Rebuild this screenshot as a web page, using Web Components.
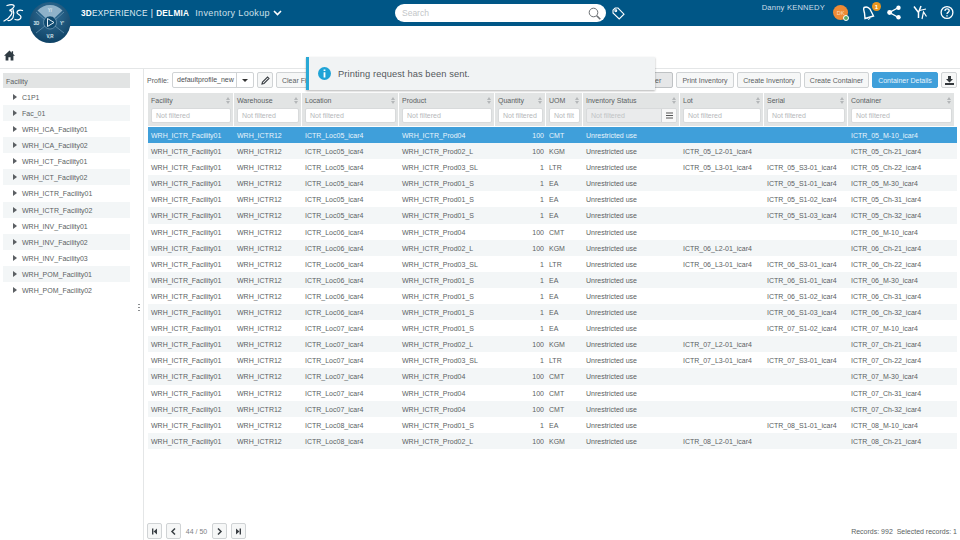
<!DOCTYPE html>
<html>
<head>
<meta charset="utf-8">
<title>Inventory Lookup</title>
<style>
	html, body { margin: 0; height: 100%; }
	body { width: 960px; height: 540px; overflow: hidden; background: #fff; font-family: "Liberation Sans", Arial, sans-serif; color: #5b5f63; }
	inv-app { height: 540px; }
</style>
</head>
<body>
<inv-app>
	<inv-header slot="header"></inv-header>
	<inv-tree slot="tree"></inv-tree>
	<inv-toolbar slot="toolbar"></inv-toolbar>
	<inv-grid slot="grid"></inv-grid>
	<inv-pager slot="pager"></inv-pager>
	<inv-toast slot="toast">Printing request has been sent.</inv-toast>
</inv-app>
<script>
const btnStyles = `
	.btn {
		box-sizing: border-box;
		display: inline-flex;
		align-items: center;
		justify-content: center;
		height: 16px;
		padding: 1px 5px 0;
		font: 7px "Liberation Sans", Arial, sans-serif;
		color: #5b5f63;
		background: #f6f7f7;
		border: 1px solid #d0d3d5;
		border-radius: 2px;
		white-space: nowrap;
	}
	.btn.primary { background: #3f9fda; border-color: #3f9fda; color: #e8f4fb; }
`;

class InvApp extends HTMLElement {
	constructor() {
		super();
		this.attachShadow({ mode: 'open' });
	}

	connectedCallback() {
		this.shadowRoot.innerHTML = `
		<style>
			:host { display: flex; flex-direction: column; position: relative; }
			.home { height: 43px; box-sizing: border-box; padding: 24px 0 0 4px; border-bottom: 1px solid #e4e6e7; }
			.home svg { display: block; }
			.main { flex: 1; display: flex; min-height: 0; }
			.left { width: 144px; box-sizing: border-box; padding: 4px 13px 0 3px; border-right: 1px solid #e4e6e7; position: relative; }
			.right { flex: 1; display: flex; flex-direction: column; padding: 3px 3px 0 3px; min-width: 0; }
			.grip { position: absolute; right: 3px; top: 234px; width: 2px; height: 8px;
				background: radial-gradient(circle, #8a8d90 1px, transparent 1px) 0 0 / 2px 3px; }
			.spacer { flex: 1; }
		</style>
		<slot name="header"></slot>
		<div class="home">
			<svg width="11" height="11" viewBox="0 0 11 11"><path fill="#2f3a42" d="M5.5.6 0 5.7h1.6V10.6h2.8V7.2h2.2v3.4h2.8V5.7H11L9.1 4V1.2H7.7v1.5z"/></svg>
		</div>
		<div class="main">
			<div class="left"><slot name="tree"></slot><div class="grip"></div></div>
			<div class="right">
				<slot name="toolbar"></slot>
				<slot name="grid"></slot>
				<div class="spacer"></div>
				<slot name="pager"></slot>
			</div>
		</div>
		<slot name="toast"></slot>
		`;
	}
}

class InvHeader extends HTMLElement {
	constructor() {
		super();
		this.attachShadow({ mode: 'open' });
	}

	connectedCallback() {
		this.shadowRoot.innerHTML = `
		<style>
			:host { display: flex; align-items: center; height: 26px; background: #005686; color: #dfeaf1; position: relative; font-family: "Liberation Sans", Arial, sans-serif; }
			.logo { position: absolute; left: 3px; top: 3px; }
			.compass { position: absolute; left: 29px; top: 1px; z-index: 2; }
			.compass text { font: bold 4.5px "Liberation Sans", Arial, sans-serif; fill: #dfe9ef; text-anchor: middle; }
			.title { margin-left: 81px; width: 314px; font-size: 8.25px; letter-spacing: .25px; display: flex; align-items: center; white-space: nowrap; }
			.title b { font-weight: bold; color: #fff; }
			.title .sep { margin: 0 3px; color: #fff; }
			.title .app { margin-left: 6px; font-size: 9px; letter-spacing: .35px; color: #cfe0ea; }
			.title svg { margin-left: 3px; }
			.search { box-sizing: border-box; width: 211px; height: 18px; background: #fff; border-radius: 9px; display: flex; align-items: center; justify-content: space-between; padding: 0 5px 0 7px; color: #c3c6c9; font-size: 8.5px; }
			.tag { margin-left: 6px; }
			.user { position: absolute; right: 135px; top: 3px; font-size: 7.6px; letter-spacing: .2px; color: #cfdfe9; white-space: nowrap; }
			.avatar { position: absolute; left: 833px; top: 5px; width: 15px; height: 15px; border-radius: 50%; background: #ee8a35; color: #f6dcc0; font-size: 5.5px; display: flex; align-items: center; justify-content: center; }
			.avatar i { position: absolute; right: -1px; bottom: -1px; width: 6px; height: 6px; border-radius: 50%; background: #58a868; border: .5px solid #fff; box-sizing: border-box; }
			.ico { position: absolute; top: 5px; }
			.badge { position: absolute; left: 872px; top: 2px; width: 9px; height: 9px; border-radius: 50%; background: #e9961f; color: #fff; font-size: 6px; font-weight: bold; display: flex; align-items: center; justify-content: center; }
		</style>
		<svg class="logo" width="21" height="20" viewBox="0 0 21 20" fill="none" stroke="#fff" stroke-width="1.3" stroke-linecap="round">
			<path d="M4 2.5C7 1.5 10 1.5 11 2.5 11.8 3.6 9.5 6 6.5 7.5 9 7.5 9.8 9.5 8 12 6.5 14.5 3 17 1 18"/>
			<path d="M10 6.5C11 9 11 12 10 14.5 9 16.5 6.5 18 5 17.5"/>
			<path d="M19.5 7.5C17 6.5 14 7.5 14 9.5 14 11.5 18 11.5 18 14 18 16.5 14.5 17.5 12 16.5"/>
		</svg>
		<svg class="compass" width="42" height="43" viewBox="0 0 42 43">
			<defs>
				<radialGradient id="g" cx=".5" cy=".3" r=".75"><stop offset="0" stop-color="#35729a"/><stop offset="1" stop-color="#0c3f62"/></radialGradient>
			</defs>
			<circle cx="21" cy="21.5" r="20.5" fill="url(#g)"/>
			<path d="M8.5 9.5A17 17 0 0 1 33.5 9.5L25 17.5A6 6 0 0 0 17 17.5Z" fill="#8fb2c9"/>
			<path d="M7 11l9 8M35 11l-9 8M7 32l9-7M35 32l-9-7" stroke="#6f9ab6" stroke-width=".7"/>
			<circle cx="21" cy="21.5" r="6.5" fill="#0f4a70" stroke="#9ebfd3" stroke-width=".5"/>
			<path d="M18.5 17.5l6.5 4-6.5 4z" fill="none" stroke="#e6eff5" stroke-width="1"/>
			<text x="21" y="10.5">Y/</text>
			<text x="7.5" y="23.5">3D</text>
			<text x="33" y="23.5">Y'</text>
			<text x="21" y="37">V,R</text>
		</svg>
		<div class="title">
			<b>3D</b>EXPERIENCE<span class="sep">|</span><b>DELMIA</b>
			<span class="app">Inventory Lookup</span>
			<svg width="9" height="6" viewBox="0 0 9 6" fill="none" stroke="#fff" stroke-width="1.6"><path d="M1 1l3.5 3.5L8 1"/></svg>
		</div>
		<div class="search">
			<span>Search</span>
			<svg width="13" height="13" viewBox="0 0 13 13" fill="none" stroke="#6c7074"><circle cx="5.5" cy="5.5" r="4.3" stroke-width="1"/><path d="M8.7 8.7l3.6 3.6" stroke-width="1.6"/></svg>
		</div>
		<svg class="tag" width="13" height="13" viewBox="0 0 13 13" fill="none" stroke="#fff" stroke-width="1.1"><path d="M1 3.2 3.2 1H6l6 6.2-4.8 4.8L1 6z"/><circle cx="3.8" cy="3.8" r=".9"/></svg>
		<span class="user">Danny KENNEDY</span>
		<div class="avatar">DK<i></i></div>
		<svg class="ico" style="left:861px" width="14" height="16" viewBox="0 0 14 16" fill="none" stroke="#fff" stroke-width="1.4"><path d="M3 2.5C6 1 9 3 10 6L12.5 11 4 13.5 3.5 8C3 6 2 4 3 2.5Z"/><path d="M6.5 13.5c.5 1.2 2 1.2 2.6-.5" stroke-width="1"/></svg>
		<span class="badge">1</span>
		<svg class="ico" style="left:887px" width="14" height="15" viewBox="0 0 14 15"><path d="M11.5 2.5 2.5 7.5l9 5" fill="none" stroke="#fff" stroke-width="1.4"/><circle cx="11.5" cy="2.8" r="2.2" fill="#fff"/><circle cx="2.6" cy="7.5" r="2.4" fill="#fff"/><circle cx="11.5" cy="12.2" r="2.2" fill="#fff"/></svg>
		<svg class="ico" style="left:913px" width="14" height="15" viewBox="0 0 14 15" fill="none" stroke="#fff" stroke-width="1.5"><path d="M1 1.5 5.5 7.5V13M8 1 5.5 7.5"/><path d="M6.5 5.5 13 4M9 14l1.5-7 3 4.5" stroke-width="1.2"/></svg>
		<svg class="ico" style="left:940px" width="14" height="15" viewBox="0 0 14 15" fill="none" stroke="#fff" stroke-width="1.3"><circle cx="7" cy="7.5" r="5.9"/><path d="M4.9 5.9C5 4.5 6 3.9 7.1 3.9 8.4 3.9 9.2 4.8 9.2 5.8 9.2 7.4 7 7.4 7 9.1"/><path d="M7 10.2v1.3" stroke-width="1.4"/></svg>
		`;
	}
}

class InvTree extends HTMLElement {
	constructor() {
		super();
		this.attachShadow({ mode: 'open' });
	}

	connectedCallback() {
		const items = ['C1P1', 'Fac_01', 'WRH_ICA_Facility01', 'WRH_ICA_Facility02', 'WRH_ICT_Facility01', 'WRH_ICT_Facility02',
			'WRH_ICTR_Facility01', 'WRH_ICTR_Facility02', 'WRH_INV_Facility01', 'WRH_INV_Facility02', 'WRH_INV_Facility03',
			'WRH_POM_Facility01', 'WRH_POM_Facility02'];
		let rows = '';
		items.forEach((name, i) => {
			rows += `<div class="item ${i % 2 ? 'odd' : ''}"><span class="arrow"></span>${name}</div>`;
		});
		this.shadowRoot.innerHTML = `
		<style>
			:host { display: block; font: 7px "Liberation Sans", Arial, sans-serif; color: #5b5f63; }
			.head { height: 15px; line-height: 17px; padding-left: 3px; background: #e2e4e4; margin-bottom: 1px; }
			.item { height: 16.08px; line-height: 18px; padding-left: 19px; position: relative; }
			.odd { background: #f3f6f7; }
			.arrow { position: absolute; left: 10px; top: 5px; border-left: 4px solid #5b5f63; border-top: 3px solid transparent; border-bottom: 3px solid transparent; }
		</style>
		<div class="head">Facility</div>
		${rows}
		`;
	}
}

class InvToolbar extends HTMLElement {
	constructor() {
		super();
		this.attachShadow({ mode: 'open' });
	}

	connectedCallback() {
		this.shadowRoot.innerHTML = `
		<style>
			${btnStyles}
			:host { display: flex; align-items: center; height: 16px; margin-bottom: 5px; font: 7px "Liberation Sans", Arial, sans-serif; color: #5b5f63; }
			.label { width: 25px; }
			.select { box-sizing: border-box; width: 82px; height: 16px; display: flex; align-items: center; border: 1px solid #d0d3d5; border-radius: 2px; color: #4d5155; }
			.select span { flex: 1; padding-left: 4px; line-height: 14px; white-space: nowrap; overflow: hidden; }
			.select i { width: 16px; height: 14px; border-left: 1px solid #d0d3d5; display: flex; align-items: center; justify-content: center; }
			.select i::after { content: ""; border-top: 3px solid #333; border-left: 3px solid transparent; border-right: 3px solid transparent; }
			.icon { width: 16px; padding: 0; margin-left: 3px; }
			.gap { margin-left: 3px; }
			.push { margin-left: auto; }
			.active { background: #e6e7e8; border-color: #bfc2c4; }
		</style>
		<span class="label">Profile:</span>
		<div class="select"><span>defaultprofile_new</span><i></i></div>
		<div class="btn icon"><svg width="9" height="9" viewBox="0 0 9 9" fill="none" stroke="#3a3f44" stroke-width="1.1"><path d="M1 8l.5-2L6.5 1 8 2.5 3 7.5z"/></svg></div>
		<div class="btn gap">Clear Filters</div>
		<div class="btn push active" style="width:70px">Print Container</div>
		<div class="btn gap" style="width:58px">Print Inventory</div>
		<div class="btn gap" style="width:64px">Create Inventory</div>
		<div class="btn gap" style="width:65px">Create Container</div>
		<div class="btn primary gap" style="width:66px">Container Details</div>
		<div class="btn icon"><svg width="9" height="9" viewBox="0 0 9 9" fill="#33383c"><path d="M3 0h3v3h2L4.5 6.5 1 3h2zM0 7h9v2H0z"/></svg></div>
		`;
	}
}

class InvGrid extends HTMLElement {
	constructor() {
		super();
		this.attachShadow({ mode: 'open' });
	}

	connectedCallback() {
		const cols = ['Facility', 'Warehouse', 'Location', 'Product', 'Quantity', 'UOM', 'Inventory Status', 'Lot', 'Serial', 'Container'];
		const placeholders = { UOM: 'Not filt' };
		const kinds = {
			M: ['WRH_ICTR_Prod04', '100', 'CMT'],
			L: ['WRH_ICTR_Prod02_L', '100', 'KGM'],
			SL: ['WRH_ICTR_Prod03_SL', '1', 'LTR'],
			S: ['WRH_ICTR_Prod01_S', '1', 'EA']
		};
		// loc, kind, lot, serial, container suffix
		const data = [
			['05', 'M', '', '', 'M-10'], ['05', 'L', 'L2-01', '', 'Ch-21'], ['05', 'SL', 'L3-01', 'S3-01', 'Ch-22'],
			['05', 'S', '', 'S1-01', 'M-30'], ['05', 'S', '', 'S1-02', 'Ch-31'], ['05', 'S', '', 'S1-03', 'Ch-32'],
			['06', 'M', '', '', 'M-10'], ['06', 'L', 'L2-01', '', 'Ch-21'], ['06', 'SL', 'L3-01', 'S3-01', 'Ch-22'],
			['06', 'S', '', 'S1-01', 'M-30'], ['06', 'S', '', 'S1-02', 'Ch-31'], ['06', 'S', '', 'S1-03', 'Ch-32'],
			['07', 'S', '', 'S1-02', 'M-10'], ['07', 'L', 'L2-01', '', 'Ch-21'], ['07', 'SL', 'L3-01', 'S3-01', 'Ch-22'],
			['07', 'M', '', '', 'M-30'], ['07', 'M', '', '', 'Ch-31'], ['07', 'M', '', '', 'Ch-32'],
			['08', 'S', '', 'S1-01', 'M-10'], ['08', 'L', 'L2-01', '', 'Ch-21']
		];
		const tag = (loc, part) => (part ? `ICTR_${loc}_${part}_icar4` : '');

		const head = cols.map(c => {
			const status = c === 'Inventory Status';
			const filter = status
				? `<div class="filter off"><span>Not filtered</span><i><svg width="7" height="7" viewBox="0 0 7 7" stroke="#555"><path d="M0 1h7M0 3.5h7M0 6h7"/></svg></i></div>`
				: `<div class="filter"><span>${placeholders[c] || 'Not filtered'}</span></div>`;
			return `<div class="hcell"><div class="title"><span>${c}</span><span class="sort"></span></div>${filter}</div>`;
		}).join('');

		const rows = data.map(([loc, kind, lot, serial, cont], i) => {
			const [prod, qty, uom] = kinds[kind];
			const cells = ['WRH_ICTR_Facility01', 'WRH_ICTR12', `ICTR_Loc${loc}_icar4`, prod, qty, uom, 'Unrestricted use',
				tag(loc, lot), tag(loc, serial), tag(loc, cont)];
			const cls = i === 0 ? 'row sel' : i % 2 ? 'row odd' : 'row';
			return `<div class="${cls}">${cells.map((t, n) => `<div class="cell ${n === 4 ? 'num' : ''}">${t}</div>`).join('')}</div>`;
		}).join('');

		this.shadowRoot.innerHTML = `
		<style>
			:host {
				display: block;
				margin-left: 1px;
				font: 7px "Liberation Sans", Arial, sans-serif;
				color: #5b5f63;
				--cols: 86px 68px 97px 96px 51px 37px 97px 84px 84px 107px;
			}
			.head, .row { display: grid; grid-template-columns: var(--cols); }
			.head { height: 33px; margin-bottom: 1px; }
			.hcell { background: #e2e4e4; border-right: 1px solid #fff; padding: 0 1px 0 3px; box-sizing: border-box; }
			.title { display: flex; justify-content: space-between; align-items: center; height: 14px; padding-right: 2px; }
			.sort { width: 4px; height: 7px; position: relative; }
			.sort::before, .sort::after { content: ""; position: absolute; left: 0; border-left: 2px solid transparent; border-right: 2px solid transparent; }
			.sort::before { top: 0; border-bottom: 3px solid #b4b7b9; }
			.sort::after { bottom: 0; border-top: 3px solid #b4b7b9; }
			.filter { box-sizing: border-box; height: 15px; margin: 1px 1px 0 0; background: #fff; border: 1px solid #d8dadb; border-radius: 2px; padding-left: 4px; color: #b5b8ba; line-height: 13px; white-space: nowrap; overflow: hidden; display: flex; }
			.filter span { flex: 1; }
			.filter.off { background: #eaebec; color: #c0c3c5; }
			.filter i { width: 14px; background: #f8f8f8; border-left: 1px solid #d0d3d5; display: flex; align-items: center; justify-content: center; }
			.row { height: 16.1px; }
			.cell { padding: 1px 0 0 3px; line-height: 15px; height: 16px; box-sizing: border-box; white-space: nowrap; overflow: hidden; }
			.num { text-align: right; padding: 1px 2px 0 0; }
			.odd { background: #f3f6f7; }
			.sel { background: #3f9fda; color: #e8f4fb; }
		</style>
		<div class="head">${head}</div>
		${rows}
		`;
	}
}

class InvPager extends HTMLElement {
	constructor() {
		super();
		this.attachShadow({ mode: 'open' });
	}

	connectedCallback() {
		this.shadowRoot.innerHTML = `
		<style>
			${btnStyles}
			:host { display: flex; align-items: center; height: 16px; margin-bottom: 1px; font: 7px "Liberation Sans", Arial, sans-serif; color: #5b5f63; }
			.btn { width: 15px; padding: 0; }
			.btn + .btn { margin-left: 4px; }
			.page { width: 31px; text-align: center; color: #7d8184; }
			.last { margin-left: 4px; }
			.status { margin-left: auto; margin-right: 0; }
		</style>
		<div class="btn"><svg width="7" height="7" viewBox="0 0 7 7" fill="#3a3f44"><path d="M1 .5h1.4v6H1zM6 .5v6L2.6 3.5z"/></svg></div>
		<div class="btn"><svg width="7" height="7" viewBox="0 0 7 7" fill="none" stroke="#3a3f44" stroke-width="1.5"><path d="M5 .5 2 3.5l3 3"/></svg></div>
		<span class="page">44 / 50</span>
		<div class="btn"><svg width="7" height="7" viewBox="0 0 7 7" fill="none" stroke="#3a3f44" stroke-width="1.5"><path d="M2 .5l3 3-3 3"/></svg></div>
		<div class="btn last"><svg width="7" height="7" viewBox="0 0 7 7" fill="#3a3f44"><path d="M6 .5H4.6v6H6zM1 .5v6l3.4-3z"/></svg></div>
		<span class="status">Records: 992&nbsp; Selected records: 1</span>
		`;
	}
}

class InvToast extends HTMLElement {
	constructor() {
		super();
		this.attachShadow({ mode: 'open' });
	}

	connectedCallback() {
		this.shadowRoot.innerHTML = `
		<style>
			:host {
				position: absolute; left: 306px; top: 57px; width: 349px; height: 33px; box-sizing: border-box;
				display: flex; align-items: center; padding-left: 9px;
				background: #f1f3f4; border-left: 3px solid #29a9d6;
				box-shadow: 0 1px 2px rgba(0,0,0,.3);
				font: 9.3px "Liberation Sans", Arial, sans-serif; color: #55595d; letter-spacing: .1px;
			}
			svg { margin-right: 7px; }
		</style>
		<svg width="13" height="13" viewBox="0 0 13 13"><circle cx="6.5" cy="6.5" r="6.5" fill="#1fa3d6"/><path d="M5.6 2.4h1.8v1.7H5.6zM5.6 5.2h1.8v5.4H5.6z" fill="#fff"/></svg>
		<slot></slot>
		`;
	}
}

customElements.define('inv-app', InvApp);
customElements.define('inv-header', InvHeader);
customElements.define('inv-tree', InvTree);
customElements.define('inv-toolbar', InvToolbar);
customElements.define('inv-grid', InvGrid);
customElements.define('inv-pager', InvPager);
customElements.define('inv-toast', InvToast);
</script>
</body>
</html>
